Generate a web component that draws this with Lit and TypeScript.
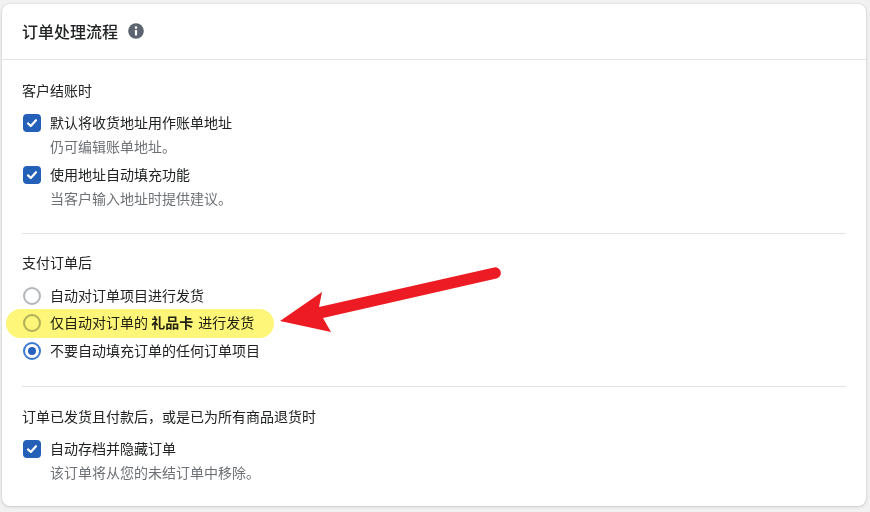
import { LitElement, html, css } from "lit";
import { customElement } from "lit/decorators.js";

@customElement("app-root")
export class AppRoot extends LitElement {
  static styles = css`
    :host {
      display: block;
      width: 870px;
      height: 512px;
      background: #f1f1f1;
      font-family: "Noto Sans CJK SC", "Liberation Sans", sans-serif;
      font-size: 14px;
      color: #202223;
      position: relative;
      overflow: hidden;
    }
    * { box-sizing: border-box; }
    .page { padding: 4px 4px 6px 2px; height: 512px; }
    .card {
      height: 502px;
      background: #fff;
      border-radius: 8px;
      box-shadow: 0 0 2px rgba(23, 24, 24, 0.12), 0 1px 3px rgba(23, 24, 24, 0.14);
    }
    .head {
      height: 56px;
      padding: 0 20px 1px;
      display: flex;
      align-items: center;
      gap: 10px;
      border-bottom: 1px solid #e4e5e7;
    }
    h2 { margin: 0 0 1px; font-size: 16px; line-height: 24px; font-weight: 500; }
    .info { width: 16px; height: 16px; display: block; }
    .section { margin: 0 20px; padding: 21px 0 24px; border-bottom: 1px solid #e1e3e5; }
    .section.last { border-bottom: 0; }
    .section.s2 { padding-top: 19px; padding-bottom: 21px; }
    .section.s3 { padding-top: 20px; }
    .label { line-height: 18px; height: 20px; margin-bottom: 12px; }
    .row { display: flex; align-items: center; gap: 10px; height: 20px; position: relative; }
    .row > span:last-child { margin-bottom: 2px; }
    .sub { margin: 4px 0 8px 28px; line-height: 18px; height: 20px; color: #6d7175; font-size: 14px; }
    .sub:last-child { margin-bottom: 0; }
    .box {
      width: 18px; height: 18px; flex: none; margin-left: 1px; margin-right: -1px;
      border-radius: 4px;
      background: #245fb8;
      display: flex; align-items: center; justify-content: center;
    }
    .box svg { width: 12px; height: 12px; display: block; }
    .radio { height: 27.5px; }
    .radios { margin-top: -3px; }
    .dot {
      width: 18px; height: 18px; flex: none; margin-left: 1px; margin-right: -1px;
      border-radius: 50%; border: 2px solid #b2b5bb; background: #fff;
    }
    .dot.on {
      border-color: #3b78d4;
      display: flex; align-items: center; justify-content: center;
    }
    .dot.on::after { content: ""; width: 8px; height: 8px; border-radius: 50%; background: #2562c0; }
    .hl::before {
      content: "";
      position: absolute;
      left: -16px;
      top: -1px;
      width: 268px;
      height: 29px;
      border-radius: 14.5px;
      background: #fdf678;
      mix-blend-mode: multiply;
    }
    b { font-weight: 700; margin-right: 2px; }
    .arrow { position: absolute; left: 270px; top: 255px; width: 240px; height: 90px; }
  `;

  check() {
    return html`<span class="box"><svg viewBox="0 0 12 12" fill="none"><path d="M2 6.4 L4.8 9 L10 3.2" stroke="#fff" stroke-width="2.2" stroke-linecap="round" stroke-linejoin="round"/></svg></span>`;
  }

  render() {
    return html`
      <div class="page">
        <div class="card">
          <div class="head">
            <h2>订单处理流程</h2>
            <svg class="info" viewBox="0 0 16 16">
              <circle cx="8" cy="8" r="7.8" fill="#5c6470"/>
              <circle cx="8" cy="4.6" r="1.3" fill="#fff"/>
              <rect x="6.9" y="7" width="2.2" height="5.4" rx="0.6" fill="#fff"/>
            </svg>
          </div>
          <div class="section">
            <div class="label">客户结账时</div>
            <div class="row">${this.check()}<span>默认将收货地址用作账单地址</span></div>
            <div class="sub">仍可编辑账单地址。</div>
            <div class="row">${this.check()}<span>使用地址自动填充功能</span></div>
            <div class="sub">当客户输入地址时提供建议。</div>
          </div>
          <div class="section s2">
            <div class="label">支付订单后</div>
            <div class="radios">
              <div class="row radio"><span class="dot"></span><span>自动对订单项目进行发货</span></div>
              <div class="row radio hl"><span class="dot"></span><span>仅自动对订单的 <b>礼品卡</b> 进行发货</span></div>
              <div class="row radio"><span class="dot on"></span><span>不要自动填充订单的任何订单项目</span></div>
            </div>
          </div>
          <div class="section s3 last">
            <div class="label">订单已发货且付款后，或是已为所有商品退货时</div>
            <div class="row">${this.check()}<span>自动存档并隐藏订单</span></div>
            <div class="sub">该订单将从您的未结订单中移除。</div>
          </div>
        </div>
      </div>
      <svg class="arrow" viewBox="270 255 240 90">
        <path d="M280 321 L322 292 L319 307 L494 267.5 A5.6 5.6 0 0 1 496.5 278.5 L323 318 L331 332 Z" fill="#ed1c24"/>
      </svg>
    `;
  }
}
